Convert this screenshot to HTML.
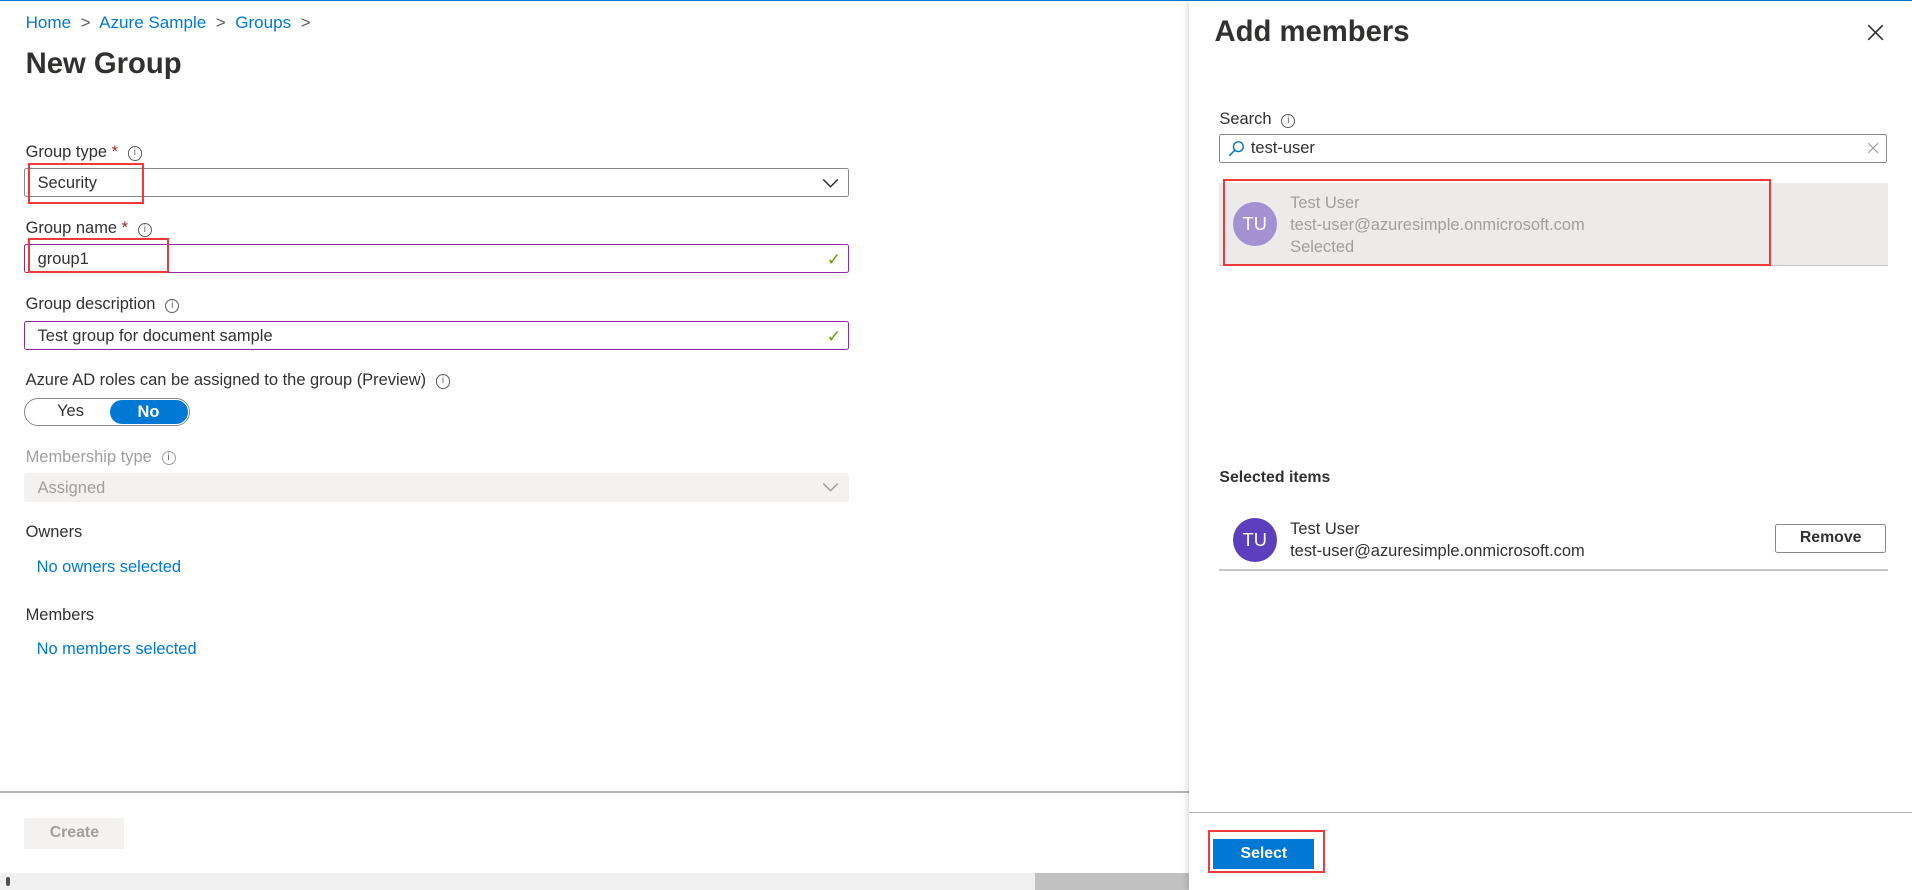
<!DOCTYPE html>
<html><head><meta charset="utf-8"><style>
html,body{margin:0;padding:0;overflow:hidden;background:#fff}
body{width:1912px;height:890px}
#r{zoom:1.21939;width:1568px;height:730px;position:relative;font-family:"Segoe UI","Liberation Sans",sans-serif;font-size:13.5px;color:#323130;overflow:hidden}
.a{position:absolute}
.lbl{position:absolute;left:21px;font-size:13.5px;color:#323130}
.info{display:inline-block;width:10px;height:10px;border:1px solid #605e5c;border-radius:50%;font-size:8px;line-height:10px;text-align:center;margin-left:8px;vertical-align:1px;color:#605e5c}
.inp{position:absolute;left:20px;width:675px;height:22px;border:1px solid #8a8886;border-radius:2px;box-sizing:content-box}
.inp span{position:absolute;left:10px;top:4px}
.red{position:absolute;border:2px solid #f03a3a}
.link{position:absolute;left:30px;color:#0078d4}
.chk{position:absolute;right:6px;top:2px;color:#57a300;font-size:14px}
</style></head><body><div id="r">
<div class="a" style="left:0;top:0;width:1568px;height:1px;background:#0078d4"></div>
<div class="a" style="left:21px;top:11px;font-size:14px;color:#0078d4">Home <span style="color:#605e5c">&nbsp;&gt;&nbsp;</span> Azure Sample <span style="color:#605e5c">&nbsp;&gt;&nbsp;</span> Groups <span style="color:#605e5c">&nbsp;&gt;</span></div>
<div class="a" style="left:21px;top:39px;font-size:24px;font-weight:600;color:#323130">New Group</div>

<div class="lbl" style="top:117px">Group type <span style="color:#a4262c">*</span><span class="info">i</span></div>
<div class="inp" style="top:138px"><span>Security</span>
<svg class="a" style="right:8px;top:6px" width="14" height="10"><path d="M1 2 L7 8 L13 2" stroke="#323130" fill="none" stroke-width="1.2"/></svg></div>
<div class="red" style="left:23px;top:134px;width:92px;height:30px"></div>

<div class="lbl" style="top:180px">Group name <span style="color:#a4262c">*</span><span class="info">i</span></div>
<div class="inp" style="top:200px;border-color:#8a2da5"><span>group1</span><span class="chk" style="left:auto">✓</span></div>
<div class="red" style="left:23px;top:195px;width:112px;height:26px"></div>

<div class="lbl" style="top:242px">Group description<span class="info">i</span></div>
<div class="inp" style="top:263px;border-color:#8a2da5"><span>Test group for document sample</span><span class="chk" style="left:auto">✓</span></div>

<div class="lbl" style="top:304px">Azure AD roles can be assigned to the group (Preview)<span class="info">i</span></div>
<div class="a" style="left:20px;top:326px;width:134px;height:22px;border:1px solid #8a8886;border-radius:12px">
<span class="a" style="left:26px;top:3px">Yes</span>
<div class="a" style="left:69px;top:1px;width:64px;height:20px;background:#0078d4;border-radius:10px;color:#fff;text-align:center;line-height:20px;font-weight:600">No</div></div>

<div class="lbl" style="top:367px;color:#a19f9d">Membership type<span class="info" style="border-color:#a19f9d">i</span></div>
<div class="inp" style="top:388px;border-color:#f3f2f1;background:#f3f2f1;color:#a19f9d"><span>Assigned</span>
<svg class="a" style="right:8px;top:6px" width="14" height="10"><path d="M1 2 L7 8 L13 2" stroke="#a19f9d" fill="none" stroke-width="1.2"/></svg></div>

<div class="lbl" style="top:429px">Owners</div>
<div class="link" style="top:458px">No owners selected</div>
<div class="lbl" style="top:497px">Members</div>
<div class="link" style="top:525px">No members selected</div>

<div class="a" style="left:0;top:649px;width:975px;height:1px;background:#b3b3b3"></div>
<div class="a" style="left:20px;top:671px;width:82px;height:25px;background:#f3f2f1;color:#a19f9d;text-align:center;line-height:25px;font-weight:600;font-size:13px">Create</div>
<div class="a" style="left:0;top:716px;width:975px;height:14px;background:#f0f0f0"></div>
<div class="a" style="left:849px;top:716px;width:126px;height:14px;background:#c1c1c1"></div>
<div class="a" style="left:5px;top:719px;width:3px;height:8px;background:#505050;border-radius:2px"></div>

<!-- panel -->
<div class="a" style="left:975px;top:1px;width:593px;height:729px;background:#fff;box-shadow:-2px 0 4px rgba(0,0,0,.12)">
<div class="a" style="left:21px;top:12px;font-size:24px;font-weight:600">Add members</div>
<svg class="a" style="left:556px;top:19px" width="14" height="14"><path d="M1 1L13 13M13 1L1 13" stroke="#323130" stroke-width="1.3"/></svg>
<div class="a" style="left:25px;top:89px">Search<span class="info">i</span></div>
<div class="a" style="left:25px;top:109px;width:546px;height:22px;border:1px solid #8a8886;border-radius:2px">
<svg class="a" style="left:6px;top:4px" width="14" height="14"><circle cx="8.5" cy="5.5" r="4" stroke="#0078d4" fill="none" stroke-width="1.2"/><path d="M5.5 8.5L1 13" stroke="#0078d4" stroke-width="1.3"/></svg>
<span class="a" style="left:25px;top:3px">test-user</span>
<svg class="a" style="right:6px;top:6px" width="10" height="10"><path d="M1 1L9 9M9 1L1 9" stroke="#a19f9d" stroke-width="1"/></svg></div>
<div class="a" style="left:25px;top:149px;width:548px;height:67px;background:#edebe9;border-bottom:1px solid #c8c6c4"></div>
<div class="a" style="left:36px;top:165px;width:36px;height:36px;border-radius:50%;background:#a391d3;color:#fff;text-align:center;line-height:36px;font-size:15px">TU</div>
<div class="a" style="left:83px;top:157px;color:#a19f9d;line-height:18px">Test User<br>test-user@azuresimple.onmicrosoft.com<br>Selected</div>
<div class="red" style="left:28px;top:146px;width:446px;height:68px"></div>

<div class="a" style="left:25px;top:384px;font-weight:600;font-size:13px">Selected items</div>
<div class="a" style="left:36px;top:424px;width:36px;height:36px;border-radius:50%;background:#5c3fbc;color:#fff;text-align:center;line-height:36px;font-size:15px">TU</div>
<div class="a" style="left:83px;top:425px;line-height:18px">Test User<br>test-user@azuresimple.onmicrosoft.com</div>
<div class="a" style="left:481px;top:429px;width:89px;height:22px;border:1px solid #8a8886;border-radius:2px;text-align:center;line-height:22px;font-weight:600;font-size:13px">Remove</div>
<div class="a" style="left:25px;top:466px;width:548px;height:1px;background:#c8c6c4"></div>

<div class="a" style="left:0;top:665px;width:593px;height:1px;background:#b3b3b3"></div>
<div class="a" style="left:20px;top:687px;width:83px;height:25px;background:#0078d4;color:#fff;text-align:center;line-height:25px;font-weight:600;font-size:13px">Select</div>
<div class="red" style="left:16px;top:680px;width:92px;height:32px"></div>
</div>
</div></body></html>
